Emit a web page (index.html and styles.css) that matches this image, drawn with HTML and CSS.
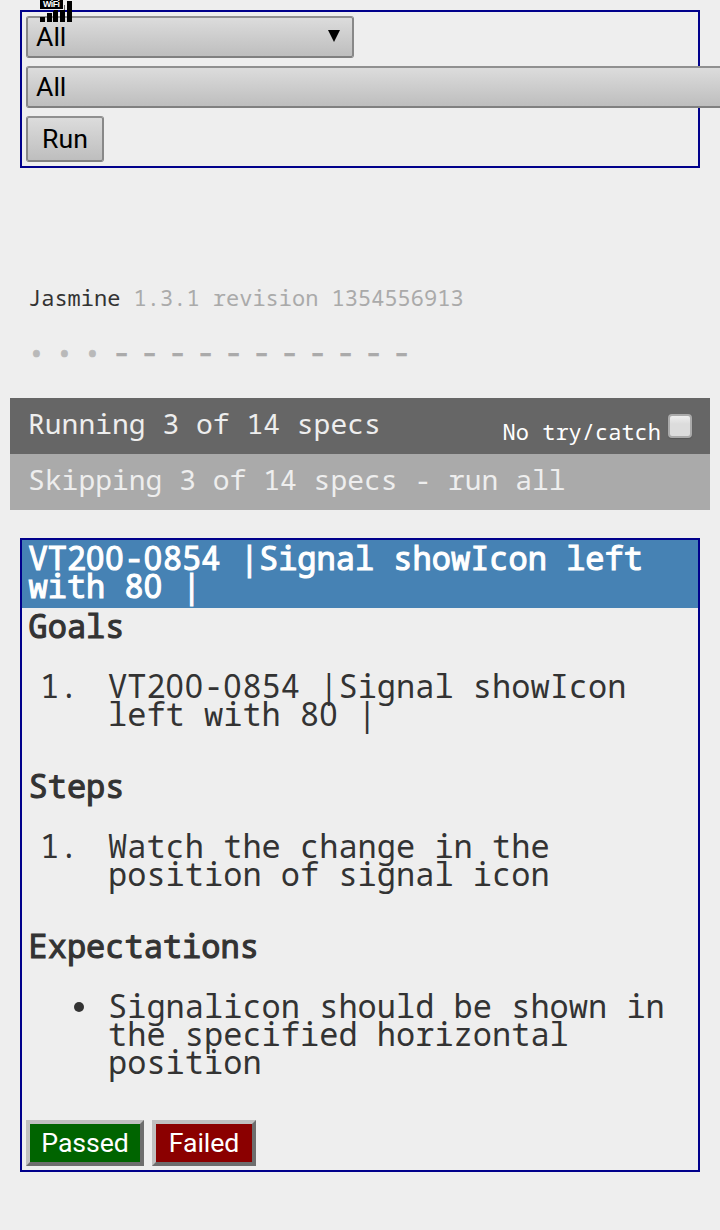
FILE: index.html
```html
<!DOCTYPE html>
<html lang="en">
<head>
<meta charset="utf-8">
<title>Jasmine Spec Runner</title>
<link rel="stylesheet" href="styles.css">
</head>
<body>
<svg class="signal" width="32" height="22" viewBox="0 0 32 22" shape-rendering="crispEdges">
  <path d="M0 0h23v9H0zM0 17h5v5H0zM7 13h5v9H7zM14 10h4v12h-5V12zM20 10h5v12h-5zM27 1h5v21h-5z"/>
  <path d="M24 5h1v5h-1z" fill="#666"/>
  <text x="3" y="7.4" textLength="17">WiFi</text>
</svg>
<div class="filters">
  <div class="select select-short"><span>All</span><svg width="12" height="12" viewBox="0 0 12 12"><path d="M0 0h12L6 12z"/></svg></div>
  <div class="select select-long"><span>All</span></div>
  <button class="run">Run</button>
</div>
<main class="reporter">
  <div class="banner">Jasmine <span class="version">1.3.1 revision 1354556913</span></div>
  <ul class="symbols">
    <li class="dot">•</li><li class="dot">•</li><li class="dot">•</li>
    <li>-</li><li>-</li><li>-</li><li>-</li><li>-</li><li>-</li><li>-</li><li>-</li><li>-</li><li>-</li><li>-</li>
  </ul>
  <div class="bar running"><span>Running 3 of 14 specs</span><label class="catch">No try/catch<i class="check"></i></label></div>
  <div class="bar skipping"><span>Skipping 3 of 14 specs - run all</span></div>
</main>
<section class="spec">
  <h1 class="title">VT2<span class="zero">00</span>-<span class="zero">0</span>854 |Signal showIcon left<br>with 8<span class="zero">0</span> |</h1>
  <h2 class="heading">Goals</h2>
  <div class="item"><span class="number">1.</span><p>VT2<span class="zero">00</span>-<span class="zero">0</span>854 |Signal showIcon<br>left with 8<span class="zero">0</span> |</p></div>
  <h2 class="heading">Steps</h2>
  <div class="item"><span class="number">1.</span><p>Watch the change in the<br>position of signal icon</p></div>
  <h2 class="heading">Expectations</h2>
  <div class="item"><span class="bullet"></span><p>Signalicon should be shown in<br>the specified horizontal<br>position</p></div>
  <div class="actions"><button class="result passed">Passed</button><button class="result failed">Failed</button></div>
</section>
</body>
</html>
```

FILE: styles.css
```css
* { box-sizing: border-box; }
html { overflow: hidden; }
body {
  margin: 0;
  padding-top: 10px;
  height: 1230px;
  overflow: hidden;
  background: #eee;
  color: #333;
  font-family: "Droid Sans Mono", "Noto Sans Mono", "DejaVu Sans Mono", monospace;
}
.signal { position: absolute; left: 40px; top: 0; z-index: 2; }
.signal text { font: bold 8.8px "Liberation Sans", sans-serif; fill: #fff; }
.filters {
  display: flex;
  flex-direction: column;
  align-items: flex-start;
  gap: 8px;
  width: 680px;
  height: 158px;
  margin-left: 20px;
  padding: 4px;
  border: 2px solid #00008b;
}
.select, .run {
  flex: none;
  border: 2px solid #888;
  border-color: #909090 #888 #808080;
  border-radius: 3px;
  background: linear-gradient(#dcdcdc, #bebebe);
  color: #000;
  font: 26.67px/30px Roboto, sans-serif;
}
.select {
  display: flex;
  align-items: center;
  justify-content: space-between;
  height: 42px;
  padding: 0 12px 0 8px;
}
.select svg { margin-top: -3px; }
.select-short { width: 328px; }
.select-long { width: 780px; }
.run { width: 78px; height: 46px; padding: 0; }
.reporter { padding: 0 10px; margin-top: 115px; }
.banner {
  height: 28px;
  padding-left: 18px;
  font-size: 22px;
  line-height: 28px;
}
.version { color: #aaa; }
.symbols {
  display: flex;
  height: 28px;
  margin: 28px 0 0;
  padding: 0 0 0 18px;
  list-style: none;
  color: #aaa;
}
.symbols li {
  width: 28px;
  font-size: 32px;
  line-height: 26px;
  -webkit-text-stroke: 0.7px currentColor;
}
.symbols .dot {
  color: #b9b9b9;
  font-size: 28px;
  line-height: 28px;
}
.bar {
  display: flex;
  justify-content: space-between;
  height: 56px;
  padding: 0 18px;
  color: #eee;
  font-size: 28px;
  line-height: 51px;
}
.running { margin-top: 31px; background: #666; }
.skipping { background: #aaa; }
.catch {
  display: flex;
  gap: 7px;
  color: #fff;
  font-size: 22px;
  line-height: 66px;
}
.check {
  width: 24px;
  height: 24px;
  margin-top: 16px;
  border: 2px solid #aaa;
  border-radius: 4px;
  background: linear-gradient(#eee, #dcdcdc 40%);
  box-shadow: 0 1px 1px #555;
}
.spec {
  width: 680px;
  height: 634px;
  margin: 28px 0 0 20px;
  border: 2px solid #00008b;
  font-size: 32px;
  line-height: 28px;
}
.zero {
  font-family: "Noto Sans", sans-serif;
  letter-spacing: 0.9px;
  line-height: 0;
}
.title, .heading {
  margin: 0;
  padding-left: 6.5px;
  font-size: 32px;
  font-weight: normal;
  -webkit-text-stroke: 1.1px currentColor;
}
.title { height: 68px; padding-top: 4px; background: #4682b4; color: #fff; }
.heading { height: 40px; padding-top: 4px; }
.item { display: flex; min-height: 120px; padding-top: 24px; }
.item p { margin: 0; }
.number { width: 86px; padding-left: 18px; }
.bullet {
  width: 10px;
  height: 10px;
  margin: 10px 24px 0 52px;
  border-radius: 50%;
  background: #333;
}
.actions { display: flex; gap: 8px; padding: 32px 4px 0; }
.result {
  height: 46px;
  padding: 0;
  border: 4px solid;
  border-color: #c0c0c0 #6e6e6e #6e6e6e #c0c0c0;
  color: #fff;
  font: 26.67px/30px Roboto, sans-serif;
  letter-spacing: -0.1px;
}
.passed { width: 118px; background: #006400; }
.failed { width: 104px; background: #8b0000; }
```
